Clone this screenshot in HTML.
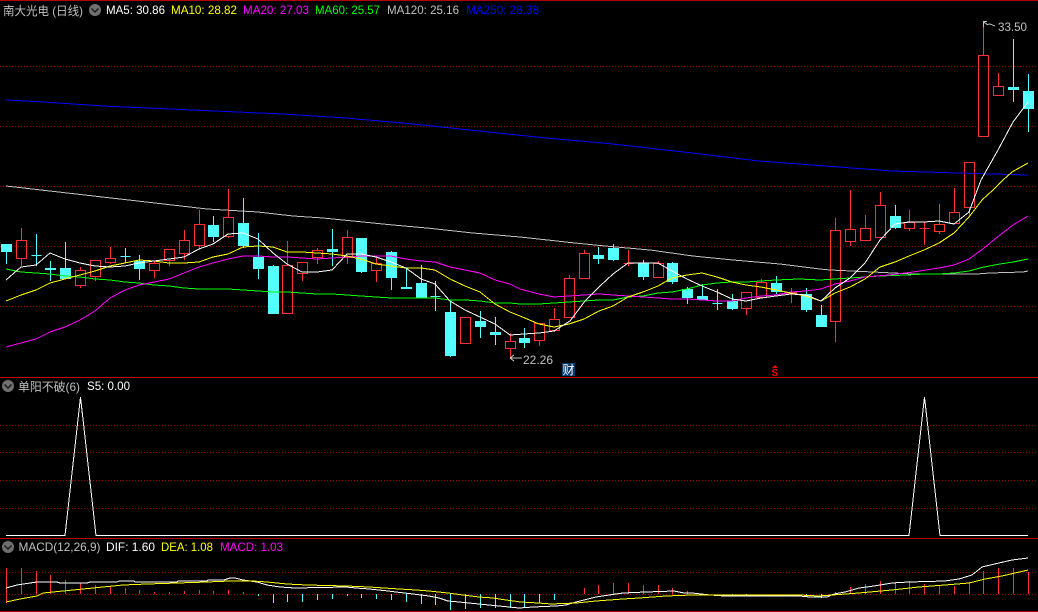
<!DOCTYPE html>
<html><head><meta charset="utf-8"><title>南大光电 (日线)</title>
<style>
html,body{margin:0;padding:0;background:#000;width:1038px;height:612px;overflow:hidden}
svg{display:block}
text{font-family:"Liberation Sans","WenQuanYi Zen Hei","Noto Sans CJK SC",sans-serif;font-size:12px}
.l{fill:none;stroke-width:1;shape-rendering:crispEdges}
.g{stroke:#9a0000;stroke-width:1;stroke-dasharray:1 2;shape-rendering:crispEdges}
</style></head><body>
<svg width="1038" height="612" viewBox="0 0 1038 612" xmlns="http://www.w3.org/2000/svg">
<rect width="1038" height="612" fill="#000"/>
<!-- separators -->
<g fill="#b00000" shape-rendering="crispEdges">
<rect x="0" y="0" width="1038" height="1"/>
<rect x="0" y="377" width="1038" height="1"/>
<rect x="0" y="538" width="1038" height="1"/>
<rect x="0" y="611" width="1038" height="1"/>
</g>
<!-- grid -->
<path class="g" d="M0 66.5H1038M0 126.5H1038M0 186.5H1038M0 246.5H1038M0 306.5H1038M0 425.5H1038M0 452.5H1038M0 480.5H1038M0 508.5H1038M0 572.5H1038M0 594.5H1038"/>
<!-- red candles -->
<path fill="none" stroke="#ff3232" stroke-width="1" shape-rendering="crispEdges" d="M16.5 240.5h10v18h-10zM21.5 228V240M21.5 259V266M75.5 270.5h10v15h-10zM80.5 267V270M80.5 286V288M90.5 260.5h10v16h-10zM95.5 277V281M105.5 258.5h10v4h-10zM110.5 247V258M110.5 263V264M149.5 263.5h10v7h-10zM154.5 261V263M154.5 271V278M164.5 249.5h10v11h-10zM169.5 261V266M179.5 240.5h10v13h-10zM184.5 230V240M184.5 254V260M194.5 224.5h10v21h-10zM199.5 210V224M199.5 246V249M223.5 217.5h10v19h-10zM228.5 189V217M228.5 237V238M282.5 265.5h10v48h-10zM287.5 241V265M297.5 262.5h10v11h-10zM302.5 274V281M312.5 250.5h10v7h-10zM317.5 248V250M317.5 258V264M342.5 237.5h10v20h-10zM347.5 230V237M347.5 258V264M371.5 263.5h10v7h-10zM376.5 258V263M376.5 271V282M460.5 317.5h10v26h-10zM505.5 341.5h10v7h-10zM510.5 333V341M510.5 349V358M534.5 323.5h10v17h-10zM539.5 341V346M549.5 319.5h10v11h-10zM554.5 308V319M554.5 331V332M564.5 278.5h10v39h-10zM569.5 275V278M579.5 253.5h10v25h-10zM584.5 250V253M623.5 263.5h10M628.5 250V266M653.5 263.5h10v14h-10zM658.5 261V263M741.5 292.5h10v16h-10zM746.5 309V315M756.5 282.5h10v15h-10zM761.5 279V282M786.5 292.5h10v1h-10zM791.5 288V292M791.5 294V303M830.5 230.5h10v91h-10zM835.5 218V230M835.5 322V342M845.5 229.5h10v12h-10zM850.5 190V229M850.5 242V246M860.5 228.5h10v12h-10zM865.5 215V228M875.5 205.5h10v32h-10zM880.5 192V205M904.5 222.5h10v6h-10zM909.5 210V222M909.5 229V231M919.5 228.5h10M924.5 222V245M934.5 224.5h10v7h-10zM939.5 204V224M939.5 232V234M949.5 212.5h10v11h-10zM954.5 188V212M964.5 162.5h10v45h-10zM969.5 208V217M978.5 55.5h10v81h-10zM983.5 21V55M993.5 86.5h10v9h-10zM998.5 73V86"/>
<!-- cyan candles -->
<path fill="#54ffff" stroke="#54ffff" stroke-width="1" shape-rendering="crispEdges" d="M1.5 244.5h10v7h-10zM6.5 244V264M31.5 255.5h10M36.5 234V266M45.5 268.5h10v1h-10zM50.5 261V281M60.5 268.5h10v10h-10zM65.5 242V279M120.5 256.5h10M125.5 248V263M134.5 261.5h10v7h-10zM139.5 255V280M208.5 225.5h10v11h-10zM213.5 216V242M238.5 223.5h10v22h-10zM243.5 198V248M253.5 257.5h10v11h-10zM258.5 233V279M268.5 266.5h10v47h-10zM273.5 265V314M327.5 249.5h10v2h-10zM332.5 229V266M356.5 238.5h10v33h-10zM361.5 238V273M386.5 252.5h10v25h-10zM391.5 251V290M401.5 287.5h10v1h-10zM406.5 268V289M416.5 283.5h10v14h-10zM421.5 265V298M430.5 296.5h10M435.5 281V311M445.5 312.5h10v43h-10zM450.5 301V357M475.5 321.5h10v5h-10zM480.5 311V338M490.5 332.5h10v2h-10zM495.5 317V345M519.5 338.5h10v4h-10zM524.5 328V348M593.5 255.5h10v3h-10zM598.5 247V264M608.5 248.5h10v11h-10zM613.5 244V261M638.5 263.5h10v13h-10zM643.5 260V280M667.5 263.5h10v18h-10zM672.5 262V284M682.5 289.5h10v8h-10zM687.5 287V304M697.5 296.5h10v3h-10zM702.5 284V300M712.5 303.5h10M717.5 289V310M727.5 301.5h10v7h-10zM732.5 294V310M771.5 283.5h10v8h-10zM776.5 276V294M801.5 294.5h10v15h-10zM806.5 288V312M816.5 315.5h10v11h-10zM821.5 305V327M890.5 216.5h10v11h-10zM895.5 205V229M1008.5 87.5h10v2h-10zM1013.5 39V102M1023.5 91.5h10v17h-10zM1028.5 74V132"/>
<!-- MA lines -->
<polyline class="l" stroke="#0000ff" points="6,100 44,102 73,104 103,106 147,108 192,110 237,112 283,114 346,118 413,124 479,131 546,138 613,144 692,153 759,161 825,166 892,171 959,173 1028,175"/>
<polyline class="l" stroke="#c0c0c0" points="6,186 155,203 207,209 258,212 293,216 323,218 353,221 393,225 427,228 473,233 520,237 575,243 605,246 650,250 693,256 733,260 780,264 820,269 830,270 873,272 913,274 977,274 990,273 1023,272 1028,271"/>
<polyline class="l" stroke="#00ff00" points="6,269 21,272 36,273 50,274 65,276 80,277 95,279 110,280 125,282 139,283 154,285 169,286 184,288 199,289 228,289 243,290 258,291 273,292 287,292 302,293 317,294 332,294 347,295 361,296 376,297 391,298 435,298 450,300 465,300 480,301 495,303 510,303 520,304 539,304 554,303 569,302 584,301 599,300 613,300 628,297 643,296 658,293 672,292 687,289 702,285 717,283 732,282 746,282 761,281 776,280 799,279 820,280 835,279 850,278 865,277 880,276 907,275 924,274 939,274 954,273 969,271 984,267 1000,264 1013,262 1028,259"/>
<polyline class="l" stroke="#ff00ff" points="6,347 21,343 36,339 50,332 65,327 80,320 95,311 110,298 125,290 139,285 154,282 169,279 184,273 199,267 213,263 228,259 243,256 258,256 273,257 287,257 302,258 317,259 332,258 347,257 361,256 376,256 391,256 406,259 421,261 435,262 450,267 465,270 480,273 495,280 510,284 520,289 539,294 554,297 569,296 584,295 599,294 628,296 643,297 658,298 672,299 687,299 702,300 717,301 732,301 746,298 761,296 776,295 791,292 806,291 821,289 835,284 850,281 865,277 877,276 889,275 913,272 939,268 954,265 969,259 984,248 1000,235 1013,225 1028,216"/>
<polyline class="l" stroke="#ffff00" points="6,301 21,295 36,290 50,283 65,279 80,275 95,271 110,266 125,263 139,260 154,261 169,263 184,263 199,262 213,257 228,254 243,247 258,246 273,247 287,252 302,252 317,253 332,254 347,256 361,259 376,264 391,266 406,268 421,268 435,270 450,279 465,286 480,292 495,304 510,312 520,316 539,324 554,327 569,324 584,319 599,311 613,306 628,297 643,292 658,286 672,278 687,275 702,273 717,277 732,282 746,285 761,287 776,290 791,293 806,296 821,301 835,293 850,287 865,279 880,267 895,262 909,256 924,250 939,243 954,233 969,217 982,200 993,190 1003,180 1012,172 1028,163"/>
<polyline class="l" stroke="#ffffff" points="6,280 21,267 36,265 50,253 65,259 80,263 95,266 110,267 125,266 139,263 154,261 169,259 184,257 199,249 213,244 228,234 243,233 258,239 273,253 287,264 302,272 317,272 332,270 347,254 361,254 376,257 391,262 406,268 421,279 435,284 450,301 465,310 480,317 495,324 510,335 524,334 539,333 554,331 570,321 585,301 600,286 613,274 628,263 643,263 658,263 672,271 687,279 702,286 717,292 732,299 746,301 761,298 776,296 791,294 806,295 821,301 835,288 850,278 865,263 880,240 895,224 909,222 924,222 939,221 954,224 969,212 981,180 998,150 1013,122 1028,102"/>
<!-- high / low marks -->
<path fill="none" stroke="#c0c0c0" stroke-width="1" shape-rendering="crispEdges" d="M983.5 27V21.5H987M984 22L987 24.5L990 24L995 26"/>
<path fill="none" stroke="#c0c0c0" stroke-width="1" shape-rendering="crispEdges" d="M510 358H522M510 358L514 355M510 358L514 361"/>
<text x="998" y="31" fill="#c0c0c0" textLength="29" lengthAdjust="spacingAndGlyphs">33.50</text>
<text x="523" y="364" fill="#c0c0c0" textLength="30" lengthAdjust="spacingAndGlyphs">22.26</text>
<!-- event markers -->
<rect x="562" y="363" width="13" height="13" fill="#0b3c6e"/>
<text x="562.5" y="374" fill="#fff" style="font-size:12px">财</text>
<path d="M775 365l3 3h-6z" fill="#ff0000"/>
<text x="771.5" y="376" fill="#ff0000" style="font-size:10px;font-weight:bold">S</text>
<!-- header texts -->
<text x="3" y="15" fill="#c0c0c0" textLength="80" lengthAdjust="spacingAndGlyphs">南大光电 (日线)</text>
<circle cx="95" cy="10" r="6" fill="#707070"/><path d="M91.5 8.5L95 12L98.5 8.5" fill="none" stroke="#1c1c1c" stroke-width="1.5"/>
<text x="106" y="14" fill="#ffffff" textLength="59" lengthAdjust="spacingAndGlyphs">MA5: 30.86</text>
<text x="171" y="14" fill="#ffff00" textLength="66" lengthAdjust="spacingAndGlyphs">MA10: 28.82</text>
<text x="243" y="14" fill="#ff00ff" textLength="66" lengthAdjust="spacingAndGlyphs">MA20: 27.03</text>
<text x="315" y="14" fill="#00ff00" textLength="65" lengthAdjust="spacingAndGlyphs">MA60: 25.57</text>
<text x="387" y="14" fill="#c0c0c0" textLength="72" lengthAdjust="spacingAndGlyphs">MA120: 25.16</text>
<text x="466" y="14" fill="#0000ff" textLength="73" lengthAdjust="spacingAndGlyphs">MA250: 28.38</text>
<!-- panel 2 -->
<circle cx="8" cy="386" r="6" fill="#707070"/><path d="M4.5 384.5L8 388L11.5 384.5" fill="none" stroke="#1c1c1c" stroke-width="1.5"/>
<text x="18" y="391" fill="#c0c0c0" textLength="62" lengthAdjust="spacingAndGlyphs">单阳不破(6)</text>
<text x="87" y="390" fill="#ffffff" textLength="43" lengthAdjust="spacingAndGlyphs">S5: 0.00</text>
<polyline fill="none" stroke="#fff" stroke-width="1" shape-rendering="crispEdges" points="6,535.5 65,535.5 80.5,397 96,535.5 909,535.5 924.5,397 940,535.5 1028,535.5"/>
<!-- panel 3 -->
<circle cx="8" cy="547" r="6" fill="#707070"/><path d="M4.5 545.5L8 549L11.5 545.5" fill="none" stroke="#1c1c1c" stroke-width="1.5"/>
<text x="18.5" y="551" fill="#c0c0c0" textLength="82" lengthAdjust="spacingAndGlyphs">MACD(12,26,9)</text>
<text x="106" y="551" fill="#ffffff" textLength="49" lengthAdjust="spacingAndGlyphs">DIF: 1.60</text>
<text x="161" y="551" fill="#ffff00" textLength="52" lengthAdjust="spacingAndGlyphs">DEA: 1.08</text>
<text x="220" y="551" fill="#ff00ff" textLength="63" lengthAdjust="spacingAndGlyphs">MACD: 1.03</text>
<path fill="none" stroke="#ff3232" stroke-width="1" shape-rendering="crispEdges" d="M6.5 568V603M21.5 568V594M36.5 571V594M50.5 575V594M65.5 580V594M80.5 583V594M95.5 585V594M110.5 586V594M125.5 588V594M139.5 590V594M154.5 592V594M169.5 592V594M184.5 591V594M199.5 590V594M213.5 591V594M228.5 590V594M243.5 592V594M584.5 588V594M598.5 585V594M613.5 583V594M628.5 583V594M643.5 585V594M658.5 585V594M672.5 588V594M687.5 591V594M835.5 592V594M850.5 587V594M865.5 584V594M880.5 581V594M895.5 582V594M909.5 581V594M924.5 584V594M939.5 586V594M954.5 586V594M969.5 582V594M983.5 571V594M998.5 568V594M1013.5 568V594M1028.5 572V594"/>
<path fill="none" stroke="#54ffff" stroke-width="1" shape-rendering="crispEdges" d="M258.5 594V596M273.5 594V603M287.5 594V602M302.5 594V602M317.5 594V600M332.5 594V599M347.5 594V596M361.5 594V598M376.5 594V599M391.5 594V600M406.5 594V602M421.5 594V604M435.5 594V605M450.5 594V610M465.5 594V609M480.5 594V608M495.5 594V608M510.5 594V608M524.5 594V607M539.5 594V603M554.5 594V600M732.5 594V596M746.5 594V596M806.5 594V596M821.5 594V598"/>
<polyline class="l" stroke="#ffffff" points="6,588 17,585 30,583 37,582 57,582 60,583 87,583 90,582 117,582 119,581 134,581 135,582 177,582 178,581 207,581 208,580 224,580 230,578 235,578 243,580 257,582 267,585 280,587 295,588 346,587 356,588 369,589 379,590 388,591 396,592 413,594 429,596 439,598 448,601 459,602 469,603 479,604 489,605 499,606 509,607 519,608 533,607 556,606 566,605 576,602 584,600 596,597 609,595 623,593 646,592 674,591 684,593 692,593 710,595 725,596 754,596 799,596 810,597 827,597 834,594 845,592 859,588 874,586 892,583 909,582 945,581 959,579 972,575 982,567 999,563 1012,560 1028,558"/>
<polyline class="l" stroke="#ffff00" points="6,602 20,599 37,596 43,593 63,591 83,589 103,587 123,585 147,584 177,583 207,582 230,581 253,581 267,582 287,584 307,585 346,586 369,587 384,588 399,589 416,590 429,591 448,593 463,595 479,597 493,598 506,600 521,602 538,603 551,604 576,603 596,601 623,599 639,598 666,596 692,595 725,595 799,595 819,596 832,595 859,593 892,590 919,587 945,585 969,583 985,579 1002,576 1028,570"/>
</svg>
</body></html>
